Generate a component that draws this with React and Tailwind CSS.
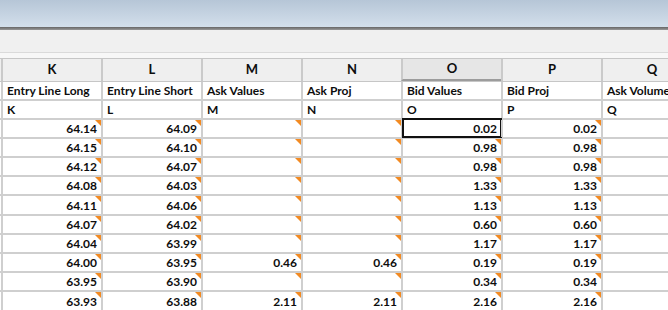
import React from "react";

const cols = ["K", "L", "M", "N", "O", "P", "Q"];
const titles = ["Entry Line Long", "Entry Line Short", "Ask Values", "Ask Proj", "Bid Values", "Bid Proj", "Ask Volume"];

const K = ["64.14", "64.15", "64.12", "64.08", "64.11", "64.07", "64.04", "64.00", "63.95", "63.93"];
const L = ["64.09", "64.10", "64.07", "64.03", "64.06", "64.02", "63.99", "63.95", "63.90", "63.88"];
const M = ["", "", "", "", "", "", "", "0.46", "", "2.11"];
const O = ["0.02", "0.98", "0.98", "1.33", "1.13", "0.60", "1.17", "0.19", "0.34", "2.16"];

const rowHeights = [19, 19, 19, 19, 20, 19, 19, 19, 19, 20];

function Marker() {
  return (
    <span className="absolute right-0 top-0 h-[6px] w-[6px] bg-[#f28a22] [clip-path:polygon(0_0,100%_0,100%_100%)]" />
  );
}

function Cell({ children, align = "left", marker = false, selected = false }) {
  return (
    <div
      className={`relative flex h-full w-[100px] shrink-0 items-center border-l-2 border-[#cfcfcf] px-[4px] pt-[1px] ${
        align === "right" ? "justify-end" : "justify-start"
      }`}
    >
      {children}
      {marker && !selected && <Marker />}
      {selected && <span className="absolute -left-[1px] -top-[2px] -bottom-[1px] -right-[1px] border-[2.5px] border-[#111]" />}
    </div>
  );
}

export default function App() {
  return (
    <div className="h-[310px] w-[668px] overflow-hidden bg-white text-[12px] font-bold text-[#0d0d0d] [font-family:Lato,'Liberation_Sans',sans-serif]">
      {/* title gradient */}
      <div className="h-[27px] bg-gradient-to-b from-[#b6c6d7] to-[#d3dfeb]" />
      <div className="h-[3px] bg-gradient-to-b from-[#666] to-[#9a9a9a]" />
      {/* ribbon strip */}
      <div className="h-[23px] border-b border-[#dadada] bg-[#f0f0f0]" />
      <div className="h-[5px] bg-[#f7f7f7]" />

      {/* column headers */}
      <div className="flex h-[24px] border-y border-[#c6c6c6] bg-[#efefef] pl-[1px] font-bold">
        {cols.map((c) => (
          <div
            key={c}
            className={`flex h-full w-[100px] shrink-0 items-center justify-center border-l-2 border-[#cacaca] text-[13px] ${
              c === "O" ? "border-b-2 border-b-[#9c9c9c] bg-[#e6e6e6]" : ""
            }`}
          >
            {c}
          </div>
        ))}
      </div>

      {/* title row */}
      <div className="flex h-[19px] border-b-2 border-[#cfcfcf] pl-[1px]">
        {titles.map((t) => (
          <Cell key={t}>
            <span className="whitespace-nowrap">{t}</span>
          </Cell>
        ))}
      </div>

      {/* letter row */}
      <div className="flex h-[19px] border-b-2 border-[#cfcfcf] pl-[1px]">
        {cols.map((c) => (
          <Cell key={c}>{c}</Cell>
        ))}
      </div>

      {K.map((k, i) => (
        <div key={i} className="flex shrink-0 border-b-2 border-[#cfcfcf] pl-[1px]" style={{ height: rowHeights[i] }}>
          <Cell align="right" marker>{k}</Cell>
          <Cell align="right" marker>{L[i]}</Cell>
          <Cell align="right" marker>{M[i]}</Cell>
          <Cell align="right" marker>{M[i]}</Cell>
          <Cell align="right" marker selected={i === 0}>{O[i]}</Cell>
          <Cell align="right" marker>{O[i]}</Cell>
          <Cell />
        </div>
      ))}
    </div>
  );
}
